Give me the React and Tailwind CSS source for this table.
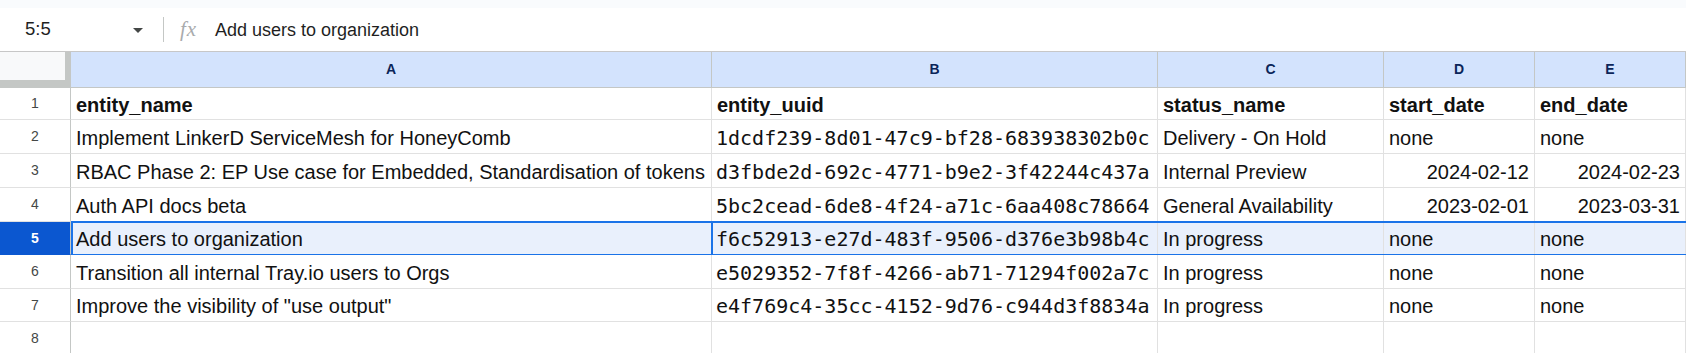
import React from "react";

const COLS = [
  { key: "A", w: "w-[641px]" },
  { key: "B", w: "w-[446px]" },
  { key: "C", w: "w-[226px]" },
  { key: "D", w: "w-[151px]" },
  { key: "E", w: "w-[151px]" },
];

const ROWS = [
  { n: 1, h: "h-[32px]", bold: true, cells: ["entity_name", "entity_uuid", "status_name", "start_date", "end_date"] },
  { n: 2, h: "h-[34px]", cells: ["Implement LinkerD ServiceMesh for HoneyComb", "1dcdf239-8d01-47c9-bf28-683938302b0c", "Delivery - On Hold", "none", "none"] },
  { n: 3, h: "h-[34px]", dates: true, cells: ["RBAC Phase 2: EP Use case for Embedded, Standardisation of tokens", "d3fbde2d-692c-4771-b9e2-3f42244c437a", "Internal Preview", "2024-02-12", "2024-02-23"] },
  { n: 4, h: "h-[34px]", dates: true, cells: ["Auth API docs beta", "5bc2cead-6de8-4f24-a71c-6aa408c78664", "General Availability", "2023-02-01", "2023-03-31"] },
  { n: 5, h: "h-[33px]", selected: true, cells: ["Add users to organization", "f6c52913-e27d-483f-9506-d376e3b98b4c", "In progress", "none", "none"] },
  { n: 6, h: "h-[34px]", cells: ["Transition all internal Tray.io users to Orgs", "e5029352-7f8f-4266-ab71-71294f002a7c", "In progress", "none", "none"] },
  { n: 7, h: "h-[33px]", cells: ["Improve the visibility of \"use output\"", "e4f769c4-35cc-4152-9d76-c944d3f8834a", "In progress", "none", "none"] },
  { n: 8, h: "h-[34px]", cells: ["", "", "", "", ""] },
];

function Cell({ col, idx, row, value }) {
  const isMono = idx === 1 && !row.bold;
  const isRight = row.dates && (idx === 3 || idx === 4);
  return (
    <div
      className={
        col.w +
        " h-full shrink-0 flex items-center pt-[2px] overflow-hidden whitespace-nowrap border-r border-b border-[#e1e1e1] " +
        (isRight ? "justify-end pr-[5px] " : "pl-[5px] ") +
        (row.selected ? "bg-[#e9f0fc] " : "bg-white ")
      }
    >
      <span
        className={
          (isMono
            ? "font-['DejaVu_Sans_Mono',monospace] text-[20px] -ml-[1px] "
            : "text-[20px] ") +
          (row.bold ? "font-bold " : "") +
          "text-[#111111] leading-none"
        }
      >
        {value}
      </span>
    </div>
  );
}

export default function App() {
  return (
    <div className="w-[1686px] h-[353px] overflow-hidden bg-white font-['Liberation_Sans',Arial,sans-serif]">
      <div className="h-[8px] bg-[#f9fbfd]" />
      <div className="h-[44px] flex items-center border-b border-[#c7c7c7] bg-white">
        <div className="w-[133px] pl-[25px] text-[18.5px] text-[#1f1f1f] leading-none">5:5</div>
        <svg width="10" height="6" viewBox="0 0 10 6" className="mt-[2px]">
          <path d="M0 0 L10 0 L5 5 Z" fill="#444746" />
        </svg>
        <div className="ml-[20px] w-[1px] h-[25px] bg-[#c4c7c5]" />
        <div className="ml-[16px] w-[24px] font-['Liberation_Serif',serif] italic text-[21px] text-[#a9abad] leading-none tracking-[1px]">
          fx
        </div>
        <div className="ml-[11px] text-[18px] text-[#1f1f1f] leading-none">Add users to organization</div>
      </div>
      <div className="h-[36px] flex">
        <div className="w-[71px] h-full shrink-0 bg-[#f8f9fa] border-r-[6px] border-b-[8px] border-[#c4c7c5]" />
        {COLS.map((c) => (
          <div
            key={c.key}
            className={
              c.w +
              " h-full shrink-0 flex items-center justify-center bg-[#d3e3fd] border-r border-b border-[#c4c7c5] text-[14px] font-bold text-[#0b2559]"
            }
          >
            {c.key}
          </div>
        ))}
      </div>
      {ROWS.map((row) => (
        <div key={row.n} className={row.h + " flex relative"}>
          <div
            className={
              "w-[71px] h-full shrink-0 flex items-center justify-center border-r border-b text-[14px] " +
              (row.selected
                ? "bg-[#0b57d0] text-white font-bold border-r-[#c4c7c5] border-b-[#0b57d0]"
                : "bg-white text-[#444746] border-r-[#c4c7c5] border-b-[#e1e1e1]")
            }
          >
            {row.n}
          </div>
          {COLS.map((c, i) => (
            <Cell key={c.key} col={c} idx={i} row={row} value={row.cells[i]} />
          ))}
          {row.selected && (
            <>
              <div className="absolute left-[71px] right-0 top-[-1px] bottom-[-1px] border-2 border-r-0 border-[#1a73e8] pointer-events-none" />
              <div className="absolute left-[71px] w-[642px] top-[-1px] bottom-[-1px] border-2 border-[#1a73e8] pointer-events-none" />
            </>
          )}
        </div>
      ))}
    </div>
  );
}
